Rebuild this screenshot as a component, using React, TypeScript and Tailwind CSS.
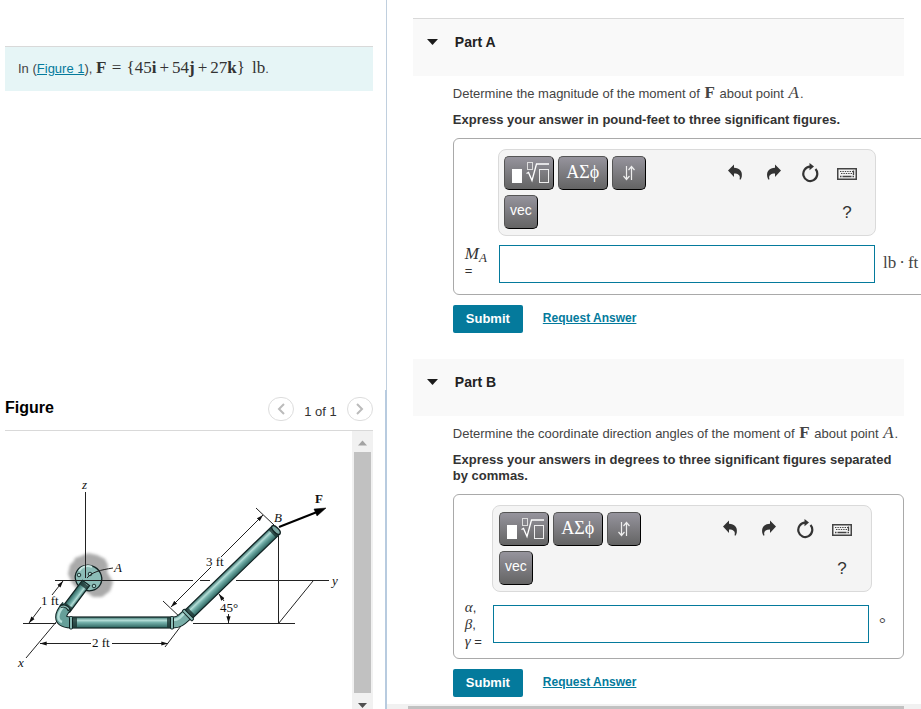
import React from "react";

type PartProps = {
  title: string;
  topBorder?: boolean;
  question: string;
  instructions: string;
  children: React.ReactNode;
};

type PipeProps = {
  x: number;
  y: number;
  length: number;
  width: number;
  angle: number;
};

const Serif = ({ children, className = "text-[17px]" }: { children: React.ReactNode; className?: string }) => (
  <span className={`font-['Liberation_Serif',serif] leading-4 ${className}`}>{children}</span>
);

const UndoIcon = ({ flip = false }: { flip?: boolean }) => (
  <svg width="20" height="20" viewBox="0 0 20 20" aria-hidden="true">
    <g transform={flip ? "translate(20 0) scale(-1 1)" : undefined} fill="#333">
      <path d="M2 7.500 8 1.500v3.300c5.600.2 8.600 3.400 7.800 8.600-.2 1.400-.7 2.400-1.400 3.300-.8 0-1-.6-.7-1.200.8-3-1.400-5-5.700-5v3.500z" />
    </g>
  </svg>
);

const ResetIcon = () => (
  <svg width="20" height="20" viewBox="0 0 20 20" fill="none" aria-hidden="true">
    <path d="M10 3.600A7 7.200 0 1 0 15.500 6" stroke="#333" strokeWidth="2.200" />
    <path d="M9.500 0v7.200L14 3.600z" fill="#333" />
  </svg>
);

const KeyboardIcon = () => (
  <svg width="20" height="20" viewBox="0 0 20 20" fill="none" aria-hidden="true">
    <rect x="0.75" y="5.750" width="18.500" height="10.500" stroke="#444" strokeWidth="1.500" />
    <path d="M3 8.500h13M4 10.500h11" stroke="#444" strokeWidth="1.200" strokeDasharray="1.400 1" />
    <path d="M16.500 7.500v4.500M3 13.500h1.500M5.500 13.500h9M15.500 13.500h1.500" stroke="#444" strokeWidth="1.300" />
  </svg>
);

const TemplateIcon = () => (
  <svg width="40" height="28" viewBox="0 0 40 28" fill="none" aria-hidden="true">
    <rect x="3" y="10" width="10" height="14" fill="#fff" />
    <rect x="18.500" y="3.500" width="5" height="7" stroke="#ddd" />
    <path d="M17.500 14.500l2-1 3.500 8 4.500-16.500H40" stroke="#fff" strokeWidth="1.300" />
    <rect x="30.500" y="10.500" width="9" height="13" stroke="#eee" />
  </svg>
);

const ArrowsIcon = () => (
  <svg width="14" height="18" viewBox="0 0 14 18" fill="none" stroke="#eee" strokeWidth="1.200" aria-hidden="true">
    <path d="M4.500 2v13M1.500 12l3 3.500 3-3.500M9.500 16V3M6.500 6l3-3.500 3 3.500" />
  </svg>
);

const toolButton =
  "flex h-[34px] shrink-0 items-center justify-center rounded-[5px] border border-t-[#555] border-r-black border-b-black border-l-[#555] bg-linear-to-b from-[#96949d] to-[#646464] text-white";

const Toolbar = ({ className = "" }: { className?: string }) => (
  <div
    className={`flex h-[87px] justify-between rounded-lg border border-[#dadada] bg-[#f4f4f4] py-1.5 ${className}`}
  >
    <div className="flex flex-col gap-[5px]">
      <div className="flex gap-1">
        <button aria-label="Templates" className={`${toolButton} w-[50px] pb-px`}>
          <TemplateIcon />
        </button>
        <button
          aria-label="Greek symbols"
          className={`${toolButton} w-[50px] pb-0.5 font-['Liberation_Serif',serif] text-[18px]`}
        >
          ΑΣϕ
        </button>
        <button aria-label="Arrows" className={`${toolButton} w-[34px]`}>
          <ArrowsIcon />
        </button>
      </div>
      <button className={`${toolButton} w-[34px] pb-1 text-[14px]`}>vec</button>
    </div>
    <div className="flex flex-col items-end gap-5 pt-[7px]">
      <div className="flex gap-[17px]">
        <button aria-label="Undo">
          <UndoIcon />
        </button>
        <button aria-label="Redo">
          <UndoIcon flip />
        </button>
        <button aria-label="Reset">
          <ResetIcon />
        </button>
        <button aria-label="Keyboard shortcuts">
          <KeyboardIcon />
        </button>
      </div>
      <button aria-label="Help" className="w-5 text-center text-[17px] leading-5 text-[#333]">
        ?
      </button>
    </div>
  </div>
);

const Part: React.FC<PartProps> = ({ title, topBorder, question, instructions, children }) => {
  return (
    <section>
      <header
        className={`flex items-start gap-[17px] bg-[#f9f9f9] pt-[15px] pb-[26px] pl-3.5 ${
          topBorder ? "border-t border-[#d9d9d9]" : ""
        }`}
      >
        <button aria-label={`Collapse ${title}`} className="pt-[5px]">
          <svg width="11" height="6" viewBox="0 0 11 6" aria-hidden="true">
            <path d="M0 0h11L5.500 6z" fill="#1c1c1c" />
          </svg>
        </button>
        <h2 className="text-[14px] leading-4 font-bold text-[#222]">{title}</h2>
      </header>
      <div className="pt-[9px] pl-10">
        <p className="text-[13px] leading-4 whitespace-nowrap text-[#444]">
          {question} <Serif className="mx-px text-[17px] font-bold">F</Serif> about point{" "}
          <Serif className="mx-px text-[17px] italic">A</Serif>.
        </p>
        <p className="mt-2.5 text-[13px] leading-4 font-bold text-[#333]">{instructions}</p>
        {children}
        <div className="mt-2.5 flex items-center gap-5">
          <button className="h-7 w-[70px] rounded-[2px] bg-[#047a9c] text-[13px] font-bold text-white">Submit</button>
          <a href="#request" className="pb-0.5 text-[12px] font-bold text-[#047a9c] underline">
            Request Answer
          </a>
        </div>
      </div>
    </section>
  );
};

const Pipe: React.FC<PipeProps> = ({ x, y, length, width, angle }) => (
  <g transform={`translate(${x} ${y}) rotate(${angle})`}>
    <rect x="0" y={-width / 2} width={length} height={width} fill="url(#pipe)" stroke="#122" strokeWidth="1.200" />
    <rect x="1" y={-width / 2} width="4" height={width} fill="#1b3532" opacity="0.8" />
    <rect x={length - 5} y={-width / 2} width="4" height={width} fill="#1b3532" opacity="0.8" />
  </g>
);

const PipeFigure = () => (
  <svg
    className="h-[278px] w-[346px] shrink-0"
    viewBox="5 431 346 278"
    fill="none"
    role="img"
    aria-label="Pipe assembly with force F applied at B"
  >
    <defs>
      <linearGradient id="pipe" x1="0" y1="0" x2="0" y2="1">
        <stop offset="0" stopColor="#2f6b66" />
        <stop offset="0.3" stopColor="#b5ded8" />
        <stop offset="0.5" stopColor="#74b0aa" />
        <stop offset="1" stopColor="#28605b" />
      </linearGradient>
      <marker id="tip" viewBox="0 0 8 6" refX="8" refY="3" markerWidth="7" markerHeight="5" orient="auto-start-reverse" markerUnits="userSpaceOnUse">
        <path d="M0 0.500 8 3 0 5.500z" fill="#111" />
      </marker>
      <filter id="soft" x="-20%" y="-20%" width="140%" height="140%">
        <feGaussianBlur stdDeviation="1.500" />
      </filter>
    </defs>

    {/* wall behind the flange */}
    <path
      d="M75 558l6-2 7-3 9 2 8 4 3 6-1 7 6 10-3 9-8 6-9 0-8-6-8-2-5-6-4-9 2-9 4-4z"
      fill="#aaa"
      filter="url(#soft)"
    />

    {/* axes and construction lines */}
    <g stroke="#222" strokeWidth="1">
      <path d="M55 580.500H193M200 580.500h10M236 580.500h93" />
      <path d="M23 623.500h33M193 623.500h102M278.500 536v87.500L313 581" />
      <path d="M57 621 26 658" />
      <path d="M256 508l18 17M163 601l20 19M184 622l-19 25" />
    </g>

    <ellipse cx="88.500" cy="578" rx="13.500" ry="12.500" fill="#8cbdb7" stroke="#122" strokeWidth="1.300" transform="rotate(30 88.500 578)" />
    <path d="M79 571c3-5 9-6 13-4" stroke="#c5e5e0" strokeWidth="2" />
    <g fill="#a9d3cd" stroke="#122" strokeWidth="0.900">
      <circle cx="79" cy="575" r="1.800" />
      <circle cx="90" cy="574" r="1.800" />
      <circle cx="94" cy="586" r="1.800" />
    </g>
    <path d="M85.500 492v86M113 568c-13 2-21 4-26 10" stroke="#222" strokeWidth="1" />
    <path d="M74 580.500h28" stroke="#222" />

    <Pipe x={86} y={583} length={33} width={9} angle={127} />
    <path d="M67 606C60 614 57 622 71 622.500" stroke="#122" strokeWidth="12" />
    <path d="M67 606C60 614 57 622 71 622.500" stroke="#669f99" strokeWidth="10" />
    <path d="M63 607C57 614 57 620 62 622" stroke="#b5ded8" strokeWidth="2.500" />
    <path d="M60.500 606.500c3-2 7 0 9 4" stroke="#122" strokeWidth="3.500" />
    <path d="M61 606.500c3-1 6 0 8 3" stroke="#8abbb5" strokeWidth="1.300" />

    <Pipe x={72} y={622.5} length={100} width={11} angle={0} />
    <path d="M173 622.500C180 622.500 182 619 189 613" stroke="#122" strokeWidth="12" />
    <path d="M173 622.500C180 622.500 182 619 189 613" stroke="#79aea8" strokeWidth="10" />
    <path d="M173 620C179 620 181 617 186 611" stroke="#b5ded8" strokeWidth="2.500" />
    <rect x="69.500" y="616.500" width="3" height="12.500" rx="1" fill="#8abbb5" stroke="#122" />
    <rect x="170.500" y="616.500" width="3" height="12.500" rx="1" fill="#8abbb5" stroke="#122" />

    <Pipe x={188} y={615} length={122} width={11} angle={-44} />
    <rect x="-1.500" y="-7" width="3" height="14" rx="1" fill="#8abbb5" stroke="#122" transform="translate(188 615) rotate(-44)" />
    <ellipse cx="276" cy="530" rx="2.500" ry="5.500" fill="#7ba7a1" stroke="#122" strokeWidth="1.300" transform="rotate(-44 276 530)" />

    {/* dimensions */}
    <g stroke="#222" strokeWidth="1">
      <path d="M52 595l11-14" markerEnd="url(#tip)" />
      <path d="M41 607l-12 16" markerEnd="url(#tip)" />
      <path d="M91 643.500H40" markerEnd="url(#tip)" />
      <path d="M112 643.500h56" markerEnd="url(#tip)" />
      <path d="M221 557l42-42" markerEnd="url(#tip)" />
      <path d="M211 567l-40 40" markerEnd="url(#tip)" />
      <path d="M224 601l-5-7" markerEnd="url(#tip)" />
      <path d="M228.500 614v9" markerEnd="url(#tip)" />
    </g>

    <path d="M279 527l38-15" stroke="#000" strokeWidth="2" />
    <path d="M326 508l-12 1 3 7z" fill="#000" stroke="#000" strokeWidth="0.500" />

    <g fill="#111" className="font-['Liberation_Serif',serif] text-[13px]">
      <g className="italic">
        <text x="82" y="489">z</text>
        <text x="114" y="572">A</text>
        <text x="274" y="522">B</text>
        <text x="332" y="585">y</text>
        <text x="18" y="667">x</text>
      </g>
      <text x="315" y="503" className="font-bold">F</text>
      <text x="41" y="605">1 ft</text>
      <text x="92" y="647">2 ft</text>
      <text x="206" y="566">3 ft</text>
      <text x="220" y="612">45°</text>
    </g>
  </svg>
);

const PagerButton = ({ label, d }: { label: string; d: string }) => (
  <button
    aria-label={label}
    className="flex h-6 w-[26px] items-center justify-center rounded-full border border-[#ddd]"
  >
    <svg width="8" height="12" viewBox="0 0 8 12" fill="none" stroke="#bbb" strokeWidth="2" aria-hidden="true">
      <path d={d} />
    </svg>
  </button>
);

const LeftPanel = () => (
  <aside className="flex w-[42%] shrink-0 flex-col">
    <div className="h-[55%] border-r border-[#c0cfde] pt-[46px] pr-[13px] pl-[5px]">
      <div className="flex h-[45px] items-center border-t border-[#d9d9d9] bg-[#e6f5f6] pl-[13px] text-[13px] whitespace-nowrap text-[#444]">
        <p>
          In (
          <a href="#figure" className="text-[#047a9c] underline">
            Figure 1
          </a>
          ),{" "}
          <Serif className="text-[17px] text-[#333]">
            <b>F</b> <span className="mx-px">=</span> {"{"}45<b>i</b>
            <span className="mx-[3px]">+</span>54<b>j</b>
            <span className="mx-[3px]">+</span>27<b>k</b>
            {"}"}
            <span className="ml-[7px]">lb</span>
          </Serif>
          .
        </p>
      </div>
    </div>
    <div id="figure" className="flex h-[45%] flex-col border-r-2 border-[#b8cbdf] pr-3 pl-[5px]">
      <div className="flex h-[41px] shrink-0 items-center justify-between border-b border-[#d9d9d9] pb-1">
        <h2 className="text-[16px] leading-5 font-bold text-black">Figure</h2>
        <div className="flex items-center gap-2.5 pt-[3px] text-[13px] text-[#333]">
          <PagerButton label="Previous figure" d="M7 1 2 6l5 5" />
          <span className="pt-1">1 of 1</span>
          <PagerButton label="Next figure" d="M1 1l5 5-5 5" />
        </div>
      </div>
      <div className="flex min-h-0 flex-1 overflow-hidden">
        <div className="min-w-0 flex-1 overflow-hidden">
          <PipeFigure />
        </div>
        <div className="flex w-[21px] shrink-0 flex-col items-center bg-[#f1f1f1]">
          <svg className="h-[21px] w-[9px] shrink-0" viewBox="0 0 9 21" aria-hidden="true">
            <path d="M0 14.500h9L4.500 9.500z" fill="#a3a3a3" />
          </svg>
          <div className="w-[17px] flex-1 bg-[#c1c1c1]" />
          <svg className="h-4 w-[9px] shrink-0" viewBox="0 0 9 16" aria-hidden="true">
            <path d="M0 10h9l-4.500 5z" fill="#505050" />
          </svg>
        </div>
      </div>
    </div>
  </aside>
);

export default function App() {
  return (
    <div className="flex h-screen overflow-hidden bg-white font-['Liberation_Sans',Arial,sans-serif]">
      <LeftPanel />
      <main className="flex min-w-0 flex-1 flex-col overflow-hidden">
        <div className="flex min-h-0 flex-1 flex-col gap-[26px] overflow-hidden pt-[18px] pr-[17px] pl-[26px]">
          <Part
            title="Part A"
            topBorder
            question="Determine the magnitude of the moment of"
            instructions="Express your answer in pound-feet to three significant figures."
          >
            <div className="mt-2.5 -mr-8 rounded-md border border-[#a9a9a9] pt-2.5 pb-2.5 pl-[11px]">
              <Toolbar className="mr-[59px] ml-[33px] pr-[18px] pl-[5px]" />
              <div className="mt-2 flex h-10 items-center">
                <label htmlFor="moment" className="w-[34px] shrink-0 pb-1 text-[13px] leading-4 text-[#333]">
                  <Serif className="text-[17px] italic">
                    M<sub className="text-[13px]">A</sub>
                  </Serif>
                  <br />=
                </label>
                <input id="moment" type="text" className="h-[38px] min-w-0 flex-1 border border-[#047a9c] bg-white px-2" />
                <Serif className="w-[60px] shrink-0 pb-0.5 pl-2 text-[17px] whitespace-nowrap text-[#444]">
                  lb<span className="mx-[3px]">·</span>ft
                </Serif>
              </div>
            </div>
          </Part>
          <Part
            title="Part B"
            question="Determine the coordinate direction angles of the moment of"
            instructions="Express your answers in degrees to three significant figures separated by commas."
          >
            <div className="mt-2.5 rounded-md border border-[#a9a9a9] pt-2.5 pb-2.5 pl-[11px]">
              <Toolbar className="mr-[31px] ml-[27px] pr-[19px] pl-1.5" />
              <div className="mt-2 flex h-12 items-center">
                <label htmlFor="angles" className="w-7 shrink-0 text-[13px] leading-[17px] whitespace-nowrap text-[#333]">
                  <Serif className="text-[15px] italic">α</Serif>,<br />
                  <Serif className="text-[15px] italic">β</Serif>,<br />
                  <Serif className="text-[15px] italic">γ</Serif> =
                </label>
                <input id="angles" type="text" className="h-[38px] min-w-0 flex-1 border border-[#047a9c] bg-white px-2" />
                <Serif className="w-[34px] shrink-0 pl-2.5 text-[17px] text-[#444]">°</Serif>
              </div>
            </div>
          </Part>
        </div>
        <div className="h-[5px] shrink-0 bg-[#f1f1f1] pt-0.5 pr-[17px] pl-[21px]">
          <div className="h-[3px] bg-[#c1c1c1]" />
        </div>
      </main>
    </div>
  );
}
